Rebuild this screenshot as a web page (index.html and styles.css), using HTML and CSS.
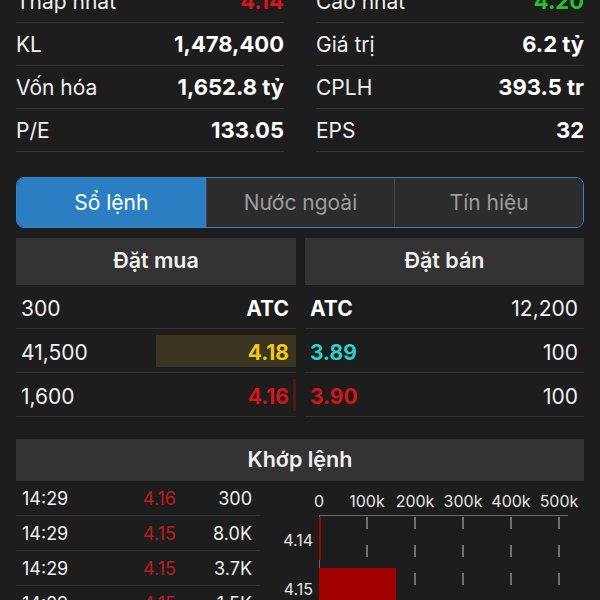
FILE: index.html
```html
<!DOCTYPE html>
<html lang="vi">

<head>
  <meta charset="UTF-8">
  <meta name="viewport" content="width=device-width, initial-scale=1.0">
  <title>Sổ lệnh</title>
  <link rel="stylesheet" href="styles.css">
</head>

<body>
  <div class="stats">
    <div class="stats-col">
      <div class="stat"><span>Thấp nhất</span><b class="down">4.14</b></div>
      <div class="stat"><span>KL</span><b>1,478,400</b></div>
      <div class="stat"><span>Vốn hóa</span><b>1,652.8 tỷ</b></div>
      <div class="stat"><span>P/E</span><b>133.05</b></div>
    </div>
    <div class="stats-col">
      <div class="stat"><span>Cao nhất</span><b class="up">4.20</b></div>
      <div class="stat"><span>Giá trị</span><b>6.2 tỷ</b></div>
      <div class="stat"><span>CPLH</span><b>393.5 tr</b></div>
      <div class="stat"><span>EPS</span><b>32</b></div>
    </div>
  </div>

  <div class="tabs">
    <div class="tab active">Sổ lệnh</div>
    <div class="tab">Nước ngoài</div>
    <div class="tab">Tín hiệu</div>
  </div>

  <div class="book">
    <div class="side buy">
      <div class="side-head">Đặt mua</div>
      <div class="book-row"><span>300</span><b>ATC</b></div>
      <div class="book-row"><i class="bar ref-bar" style="width:140px"></i><span>41,500</span><b class="ref">4.18</b></div>
      <div class="book-row"><i class="bar down-bar" style="width:3px"></i><span>1,600</span><b class="down">4.16</b></div>
    </div>
    <div class="side sell">
      <div class="side-head">Đặt bán</div>
      <div class="book-row"><b>ATC</b><span>12,200</span></div>
      <div class="book-row"><b class="floor">3.89</b><span>100</span></div>
      <div class="book-row"><b class="down">3.90</b><span>100</span></div>
    </div>
  </div>

  <div class="khop">
    <div class="khop-head">Khớp lệnh</div>
    <div class="match">
      <div class="trades">
        <div class="trade"><span>14:29</span><span class="tprice">4.16</span><span class="tvol">300</span></div>
        <div class="trade"><span>14:29</span><span class="tprice">4.15</span><span class="tvol">8.0K</span></div>
        <div class="trade"><span>14:29</span><span class="tprice">4.15</span><span class="tvol">3.7K</span></div>
        <div class="trade"><span>14:29</span><span class="tprice">4.15</span><span class="tvol">1.5K</span></div>
      </div>
      <svg class="chart" width="304" height="119" viewBox="0 0 304 119">
        <g class="xlabels">
          <text x="39" y="26">0</text>
          <text x="87" y="26">100k</text>
          <text x="135" y="26">200k</text>
          <text x="183" y="26">300k</text>
          <text x="231" y="26">400k</text>
          <text x="279" y="26">500k</text>
        </g>
        <line class="axis" x1="39" y1="34.5" x2="288" y2="34.5" />
        <line class="axis" x1="39.5" y1="34" x2="39.5" y2="119" />
        <g class="grid">
          <line x1="87" y1="36" x2="87" y2="119" />
          <line x1="135" y1="36" x2="135" y2="119" />
          <line x1="183" y1="36" x2="183" y2="119" />
          <line x1="231" y1="36" x2="231" y2="119" />
          <line x1="279" y1="36" x2="279" y2="119" />
        </g>
        <rect class="vbar" x="39" y="36" width="2" height="43" />
        <rect class="vbar" x="39" y="87" width="77" height="40" />
        <g class="ylabels">
          <text x="33" y="65">4.14</text>
          <text x="33" y="114">4.15</text>
        </g>
      </svg>
    </div>
  </div>
</body>

</html>
```

FILE: styles.css
```css
body {
  margin: 0;
  width: 600px;
  height: 600px;
  overflow: hidden;
  background-color: #1d1d1d;
  color: #f0f0f0;
  font-family: Inter, "Noto Sans", sans-serif;
}

.stats {
  display: grid;
  grid-template-columns: 1fr 1fr;
  column-gap: 32px;
  padding: 0 16px;
  margin-top: -20px;
}
.stat {
  display: flex;
  justify-content: space-between;
  align-items: center;
  height: 42px;
  border-bottom: 1px solid #363636;
  font-size: 21px;
}
.stat b {
  font-size: 22px;
  font-weight: 700;
  color: #fff;
}

.tabs {
  display: grid;
  grid-template-columns: repeat(3, 1fr);
  margin: 25px 16px 0;
  height: 51px;
  box-sizing: border-box;
  border: 1.5px solid #2e84c6;
  border-radius: 8px;
  overflow: hidden;
}
.tab {
  display: flex;
  justify-content: center;
  align-items: center;
  background-color: #2c2c2c;
  color: #9c9c9c;
  font-size: 21px;
  border-left: 1px solid #444;
}
.tab:first-child {
  border-left: none;
}
.tab.active {
  background-color: #2b7ec1;
  color: #fff;
}

.book {
  display: grid;
  grid-template-columns: 280px 279px;
  column-gap: 9px;
  margin: 10px 16px 0;
}
.side-head {
  display: flex;
  justify-content: center;
  align-items: center;
  height: 47px;
  box-sizing: border-box;
  padding-bottom: 4px;
  background-color: #333;
  font-size: 21.5px;
  font-weight: 600;
}
.book-row {
  position: relative;
  display: flex;
  justify-content: space-between;
  align-items: center;
  height: 44px;
  box-sizing: border-box;
  border-bottom: 1px solid #333;
  font-size: 21px;
}
.buy .book-row {
  padding: 3px 7px 0 5px;
}
.sell .book-row {
  padding: 3px 6px 0 5px;
}
.book-row span,
.book-row b {
  position: relative;
}
.book-row b {
  font-weight: 700;
  color: #fff;
}
.bar {
  position: absolute;
  right: 0;
  top: 6px;
  bottom: 5px;
}
.ref-bar {
  background-color: #3a3420;
}
.down-bar {
  background-color: #4e1818;
}

.khop {
  margin: 22px 16px 0;
}
.khop-head {
  display: flex;
  justify-content: center;
  align-items: center;
  height: 42px;
  box-sizing: border-box;
  padding-bottom: 2px;
  background-color: #333;
  font-size: 21.5px;
  font-weight: 600;
}
.match {
  display: flex;
}
.trades {
  width: 244px;
}
.trade {
  display: grid;
  grid-template-columns: 80px 74px 76px;
  align-items: center;
  height: 35px;
  box-sizing: border-box;
  padding: 0 8px 0 6px;
  border-bottom: 1px solid #333;
  font-size: 18px;
}
.tprice {
  text-align: right;
  color: #bb1b1e;
}
.tvol {
  text-align: right;
}
.chart {
  margin-left: 20px;
  display: block;
}
.chart text {
  font-family: Inter, "Noto Sans", sans-serif;
  font-size: 16px;
  fill: #e6e6e6;
}
.xlabels text {
  text-anchor: middle;
}
.ylabels text {
  text-anchor: end;
}
.axis {
  stroke: #6a6a6a;
  stroke-width: 1;
}
.grid line {
  stroke: #8a8a8a;
  stroke-width: 1.5;
  stroke-dasharray: 12 16;
}
.vbar {
  fill: #a30000;
}

.stat b.up,
.book-row b.up {
  color: #25c22c;
}
.stat b.down,
.book-row b.down {
  color: #d2161c;
}
.book-row b.ref {
  color: #f1c816;
}
.book-row b.floor {
  color: #2ad0cd;
}
```
